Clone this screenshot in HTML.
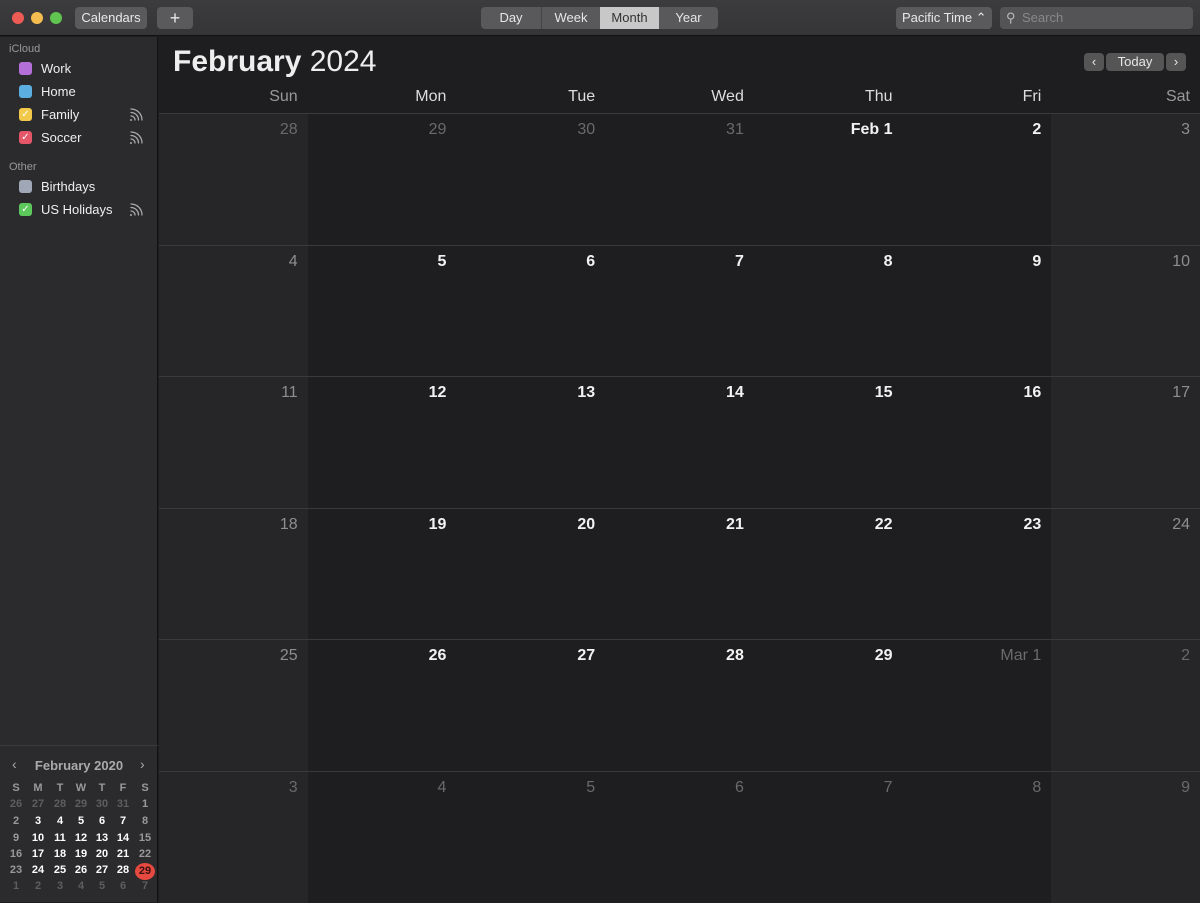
<!DOCTYPE html><html><head><style>
*{margin:0;padding:0;box-sizing:border-box}
body{width:1200px;height:902px;background:#1e1e20;font-family:"Liberation Sans",sans-serif;position:relative;overflow:hidden;color:#e6e6e6}
.tb{position:absolute;left:0;top:0;width:1200px;height:36px;background:linear-gradient(#3c3c3e,#353537);border-bottom:1px solid #111}
.dot{position:absolute;top:12px;width:12px;height:12px;border-radius:50%}
.btn{position:absolute;top:7px;height:22px;background:#5a5a5c;border-radius:4px;font-size:13px;color:#e8e8e8;text-align:center;line-height:22px}
.side{position:absolute;left:0;top:37px;width:158px;height:865px;background:#2b2b2d;border-right:1px solid #111}
.sh{position:absolute;left:9px;font-size:11px;color:#999}
.it{position:absolute;left:41px;font-size:13px;color:#eee}
.cb{position:absolute;left:19px;width:13px;height:13px;border-radius:3px;color:#fff;font-size:10px;line-height:13px;text-align:center}
.wf{position:absolute;left:129px;width:16px;height:14px}
.mini{position:absolute;left:0;top:745px;width:158px;border-top:1px solid #3a3a3c}
.m{position:absolute;width:20px;text-align:center;font-size:11px;font-weight:bold}
.grid{position:absolute;left:159px;top:113px;width:1041px;height:789px}
.cell{position:absolute;border-right:1px solid #3a3a3c;border-top:1px solid #3a3a3c;text-align:right;padding:7px 10px 0 0;font-size:16px}
.wd{position:absolute;top:88px;font-size:16px;color:#ddd;text-align:right}
</style></head><body>
<div class="tb">
<div class="dot" style="left:12px;background:#ed5b55"></div>
<div class="dot" style="left:31px;background:#f5bd4f"></div>
<div class="dot" style="left:50px;background:#5fc450"></div>
<div class="btn" style="left:75px;width:72px">Calendars</div>
<div class="btn" style="left:157px;width:36px;font-size:18px">+</div>
<div style="position:absolute;left:481px;top:7px;width:237px;height:22px;background:#59595b;border-radius:4px;font-size:13px;line-height:22px">
<span style="position:absolute;left:0;width:60px;text-align:center">Day</span>
<span style="position:absolute;left:60px;width:59px;text-align:center;border-left:1px solid #444">Week</span>
<span style="position:absolute;left:119px;width:59px;text-align:center;background:#c8c8c8;color:#333">Month</span>
<span style="position:absolute;left:178px;width:59px;text-align:center">Year</span></div>
<div class="btn" style="left:896px;width:96px;text-align:left;padding-left:6px">Pacific Time ⌃</div>
<div class="btn" style="left:1000px;width:193px;text-align:left;padding-left:22px;color:#888;background:#545456">Search<span style="position:absolute;left:6px;top:0;color:#bbb">⚲</span></div>
</div>
<svg width="0" height="0" style="position:absolute"><defs><g id="wf" fill="none" stroke="#aaa" stroke-width="1.3" stroke-linecap="round"><circle cx="2" cy="12" r="1" fill="#aaa" stroke="none"/><path d="M2 8a4 4 0 0 1 4 4M2 4.5a7.5 7.5 0 0 1 7.5 7.5M2 1a11 11 0 0 1 11 11"/></g></defs></svg>
<div class="side">
<div class="sh" style="top:6px">iCloud</div>
<div class="cb" style="top:25px;background:#b56fd8"></div><div class="it" style="top:24px">Work</div>
<div class="cb" style="top:48px;background:#5aaee0"></div><div class="it" style="top:47px">Home</div>
<div class="cb" style="top:71px;background:#f2c94a">✓</div><div class="it" style="top:70px">Family</div><svg class="wf" style="top:71px"><use href="#wf"/></svg>
<div class="cb" style="top:94px;background:#e45668">✓</div><div class="it" style="top:93px">Soccer</div><svg class="wf" style="top:94px"><use href="#wf"/></svg>
<div class="sh" style="top:124px">Other</div>
<div class="cb" style="top:143px;background:#a0a8b8"></div><div class="it" style="top:142px">Birthdays</div>
<div class="cb" style="top:166px;background:#5cc75a">✓</div><div class="it" style="top:165px">US Holidays</div><svg class="wf" style="top:166px"><use href="#wf"/></svg>
</div>
<div class="mini">
<div style="position:absolute;left:12px;top:10px;color:#aaa;font-size:14px">‹</div>
<div style="position:absolute;left:0;width:158px;top:12px;text-align:center;font-size:13px;font-weight:bold;color:#aaa">February 2020</div>
<div style="position:absolute;left:140px;top:10px;color:#aaa;font-size:14px">›</div>
<div id="mg"></div>
</div>
<div style="position:absolute;left:173px;top:45px;font-size:30px;color:#eee"><b>February</b> 2024</div>
<div class="btn" style="left:1084px;top:53px;width:20px;height:18px;line-height:18px;background:#555">‹</div>
<div class="btn" style="left:1106px;top:53px;width:58px;height:18px;line-height:18px;background:#555">Today</div>
<div class="btn" style="left:1166px;top:53px;width:20px;height:18px;line-height:18px;background:#555">›</div>
<div id="wds"></div>
<div class="grid" id="g"></div>
<script>
var w=1041/7,h=789/6,g=document.getElementById('g'),s='';
var days=['28','29','30','31','Feb 1'];for(var i=2;i<=29;i++)days.push(''+i);days.push('Mar 1');for(i=2;i<=9;i++)days.push(''+i);
for(var r=0;r<6;r++)for(var c=0;c<7;c++){var k=r*7+c,cur=k>=4&&k<33,we=c==0||c==6;
var col=!cur?'#6a6a6c':(we?'#8e8e90':'#f2f2f2');
s+='<div class="cell" style="left:'+(c*w)+'px;top:'+(r*h)+'px;width:'+(w+1)+'px;height:'+(h+1)+'px;background:'+(we?'#262628':'#1e1e20')+';color:'+col+';font-weight:'+(cur&&!we?'bold':'normal')+'">'+days[k]+'</div>'}
g.innerHTML=s;
var n=['Sun','Mon','Tue','Wed','Thu','Fri','Sat'],t='';
for(c=0;c<7;c++)t+='<div class="wd" style="left:'+(159+c*w)+'px;width:'+(w-10)+'px;color:'+(c==0||c==6?'#999':'#ddd')+'">'+n[c]+'</div>';
document.getElementById('wds').innerHTML=t;
var xs=[16,38,60,81,102,123,145],ys=[42,59,76,93,109,125,141],hd='SMTWTFS',m='';
for(c=0;c<7;c++)m+='<div class="m" style="left:'+(xs[c]-10)+'px;top:'+(ys[0]-6)+'px;color:#999">'+hd[c]+'</div>';
var md=[26,27,28,29,30,31];for(i=1;i<=29;i++)md.push(i);for(i=1;i<=7;i++)md.push(i);
for(r=0;r<6;r++)for(c=0;c<7;c++){k=r*7+c;var cu=k>=6&&k<35,st;
st=!cu?'color:#5e5e60':(c==0||c==6?'color:#999':'color:#fff');
if(k==34)st='color:#3a1010;background:#e5493f;border-radius:50%;height:17px;line-height:17px;top:'+(ys[r+1]-8)+'px';
m+='<div class="m" style="left:'+(xs[c]-10)+'px;top:'+(ys[r+1]-7)+'px;'+st+'">'+md[k]+'</div>'}
document.getElementById('mg').innerHTML=m;
</script>
</body></html>
